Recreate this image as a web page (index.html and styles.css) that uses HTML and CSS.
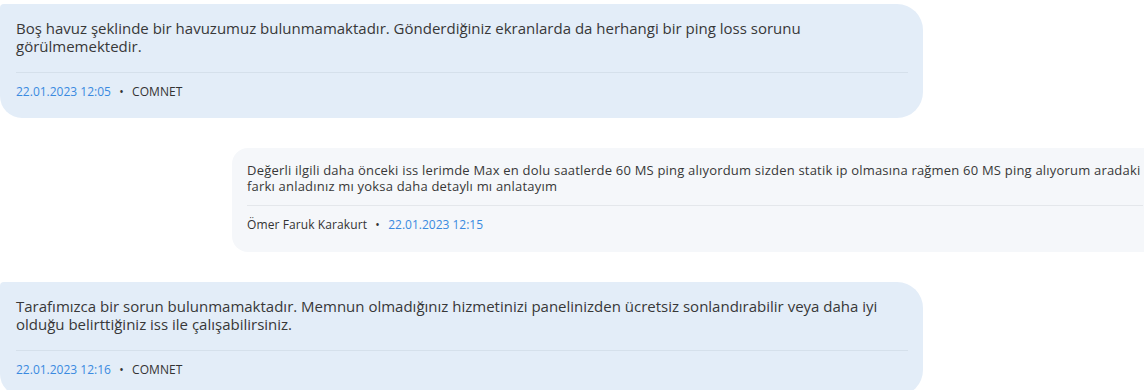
FILE: index.html
```html
<!DOCTYPE html>
<html lang="tr">
<head>
  <meta charset="UTF-8" />
  <meta name="viewport" content="width=device-width, initial-scale=1.0"/>
  <title>Destek Talebi</title>
  <link rel="stylesheet" href="styles.css">
</head>
<body>

  <div class="thread">

    <!-- Staff reply -->
    <div class="msg msg-staff">
      <div class="msg-text">Boş havuz şeklinde bir havuzumuz bulunmamaktadır. Gönderdiğiniz ekranlarda da herhangi bir ping loss sorunu görülmemektedir.</div>
      <div class="msg-meta">
        <span class="date">22.01.2023 12:05</span>
        <span class="dot">•</span>
        <span class="author">COMNET</span>
      </div>
    </div>

    <!-- Customer message -->
    <div class="msg msg-user">
      <div class="msg-text">Değerli ilgili daha önceki iss lerimde Max en dolu saatlerde 60 MS ping alıyordum sizden statik ip olmasına rağmen 60 MS ping alıyorum aradaki farkı anladınız mı yoksa daha detaylı mı anlatayım</div>
      <div class="msg-meta">
        <span class="author">Ömer Faruk Karakurt</span>
        <span class="dot">•</span>
        <span class="date">22.01.2023 12:15</span>
      </div>
    </div>

    <!-- Staff reply -->
    <div class="msg msg-staff">
      <div class="msg-text">Tarafımızca bir sorun bulunmamaktadır. Memnun olmadığınız hizmetinizi panelinizden ücretsiz sonlandırabilir veya daha iyi olduğu belirttiğiniz iss ile çalışabilirsiniz.</div>
      <div class="msg-meta">
        <span class="date">22.01.2023 12:16</span>
        <span class="dot">•</span>
        <span class="author">COMNET</span>
      </div>
    </div>

  </div>

</body>
</html>
```

FILE: styles.css
```css
body {
  font-family: 'Open Sans', 'Noto Sans', sans-serif;
  background: #fff;
  color: #383838;
  margin: 0;
  padding: 0;
  overflow: hidden;
}

.thread {
  padding-top: 4px;
  display: flex;
  flex-direction: column;
  gap: 30px;
}

.msg {
  padding: 15px 15px 17px 16px;
}

.msg-staff {
  width: 923px;
  box-sizing: border-box;
  background: #e3edf8;
  border-radius: 4px 26px 26px 22px;
}

.msg-user {
  margin-left: 232px;
  margin-right: -14px;
  background: #f5f7fa;
  border-radius: 16px 0 0 16px;
  padding: 14px 15px 18px 15px;
}

.msg-text {
  font-size: 15px;
  line-height: 18px;
  padding-bottom: 17px;
  border-bottom: 1px solid #d5e0eb;
}

.msg-user .msg-text {
  font-size: 13px;
  letter-spacing: 0.2px;
  line-height: 16px;
  padding-bottom: 11px;
  border-bottom-color: #e4e7eb;
}

.msg-meta {
  font-size: 12px;
  line-height: 18px;
  margin-top: 10px;
  color: #333;
  letter-spacing: 0.1px;
}

.msg-meta .date {
  color: #3a8ae0;
  letter-spacing: 0;
}

.msg-meta .dot {
  margin: 0 5px;
}
```
